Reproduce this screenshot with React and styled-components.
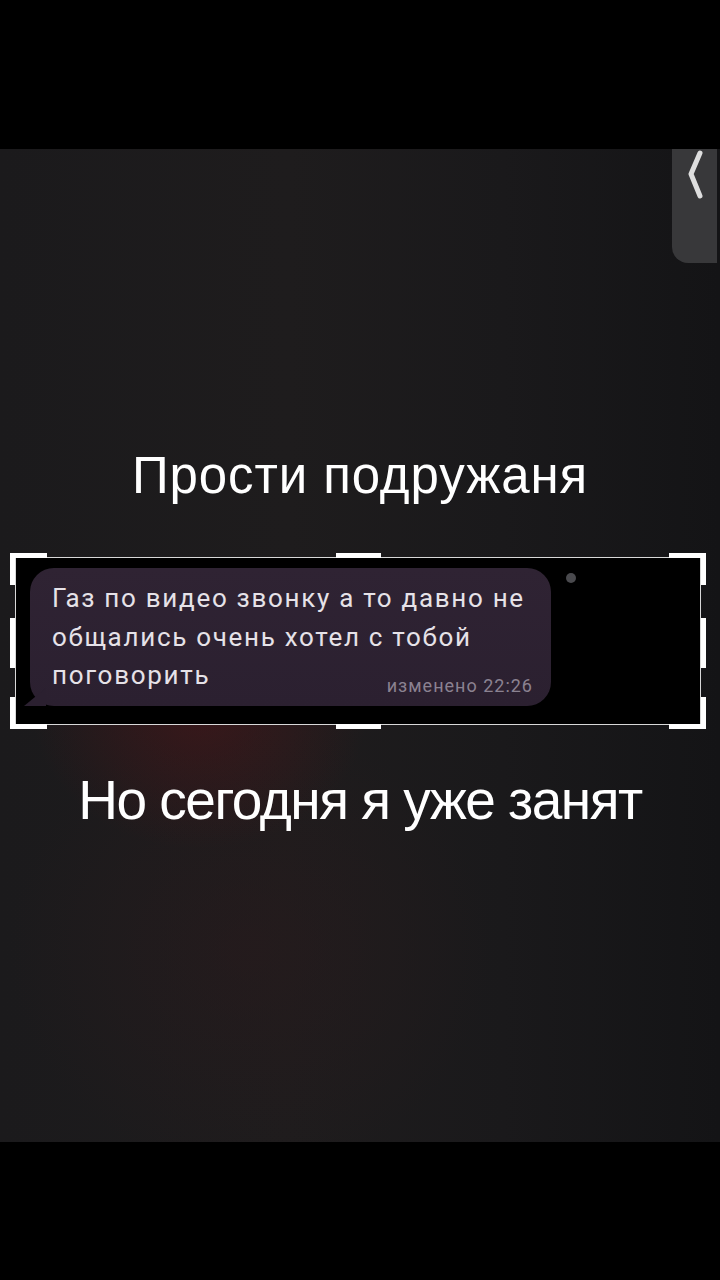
import styled, { createGlobalStyle } from "styled-components";

const GlobalStyle = createGlobalStyle`
  html, body {
    margin: 0;
    padding: 0;
    background: #000;
  }
  body {
    font-family: "Liberation Sans", Arial, sans-serif;
  }
`;

const Screen = styled.div`
  width: 720px;
  height: 1280px;
  display: flex;
  flex-direction: column;
  background: #000;
  overflow: hidden;
`;

const BlackBar = styled.div`
  height: ${(p) => p.$h}px;
  flex: none;
  background: #000;
`;

const Content = styled.div`
  position: relative;
  flex: none;
  height: 993px;
  display: flex;
  flex-direction: column;
  align-items: stretch;
  background:
    radial-gradient(ellipse 240px 200px at 200px 560px, rgba(80, 20, 24, 0.55), rgba(0, 0, 0, 0) 70%),
    radial-gradient(ellipse 320px 300px at 250px 800px, rgba(42, 26, 28, 0.5), rgba(0, 0, 0, 0) 75%),
    linear-gradient(90deg, #1b1a1c 0%, #1e1c1d 40%, #1a191b 70%, #141416 100%);
`;

const SideTab = styled.div`
  position: absolute;
  top: 0;
  right: 3px;
  width: 45px;
  height: 114px;
  background: #38383a;
  border-bottom-left-radius: 16px;
  display: flex;
  justify-content: center;
  align-items: flex-start;
  padding-top: 1px;
  box-sizing: border-box;
`;

const Caption = styled.div`
  color: #fff;
  text-align: center;
  font-family: "Liberation Sans", Arial, sans-serif;
  font-size: ${(p) => p.$size}px;
  line-height: ${(p) => p.$size}px;
  letter-spacing: ${(p) => p.$ls || 0}px;
  margin-top: ${(p) => p.$mt}px;
  white-space: nowrap;
`;

const Frame = styled.div`
  position: relative;
  margin-left: 15px;
  margin-top: ${(p) => p.$mt}px;
  width: 686px;
  height: 168px;
  box-sizing: border-box;
  border: 1.5px solid #d8d8d8;
  background: #000;
  display: flex;
  align-items: flex-start;
  padding: 10px 0 0 14px;
`;

const Bracket = styled.div`
  position: absolute;
  background: #fff;
  ${(p) => p.$pos}
`;

const Bubble = styled.div`
  position: relative;
  width: 521px;
  height: 138px;
  box-sizing: border-box;
  background: linear-gradient(180deg, #2f2333 0%, #2b2030 100%);
  border-radius: 24px;
  padding: 11px 10px 0 22px;
  color: #e6e2e8;
  font-family: Roboto, "Liberation Sans", sans-serif;
  font-size: 26px;
  line-height: 38.5px;
  letter-spacing: 1.7px;
  white-space: nowrap;
`;

const Tail = styled.div`
  position: absolute;
  left: -6px;
  bottom: 0;
  width: 22px;
  height: 18px;
  background: #2b2030;
  clip-path: polygon(0 100%, 100% 0, 100% 100%);
`;

const Stamp = styled.span`
  position: absolute;
  right: 18px;
  bottom: 10px;
  font-size: 18px;
  line-height: 20px;
  color: #8b8291;
  letter-spacing: 1px;
`;

const Dot = styled.div`
  position: absolute;
  left: 550px;
  top: 15px;
  width: 10px;
  height: 10px;
  border-radius: 50%;
  background: #4a4a4e;
`;

const brackets = [
  "left: -6px; top: -5px; width: 37px; height: 5px;",
  "left: -6px; top: -5px; width: 5px; height: 32px;",
  "right: -6px; top: -5px; width: 37px; height: 5px;",
  "right: -6px; top: -5px; width: 5px; height: 32px;",
  "left: -6px; bottom: -5px; width: 37px; height: 5px;",
  "left: -6px; bottom: -5px; width: 5px; height: 32px;",
  "right: -6px; bottom: -5px; width: 37px; height: 5px;",
  "right: -6px; bottom: -5px; width: 5px; height: 32px;",
  "left: 320px; top: -5px; width: 45px; height: 5px;",
  "left: 320px; bottom: -5px; width: 45px; height: 5px;",
  "left: -6px; top: 60px; width: 5px; height: 50px;",
  "right: -6px; top: 60px; width: 5px; height: 50px;",
];

const App = () => {
  return (
    <Screen>
      <GlobalStyle />
      <BlackBar $h={149} />
      <Content>
        <SideTab>
          <svg width="20" height="50" viewBox="0 0 20 50">
            <path
              d="M15 3 L6 24 L15 46"
              fill="none"
              stroke="#dedede"
              strokeWidth="5"
              strokeLinecap="round"
              strokeLinejoin="round"
            />
          </svg>
        </SideTab>
        <Caption $size={51} $mt={301} $ls={0.9}>
          Прости подружаня
        </Caption>
        <Frame $mt={56}>
          {brackets.map((pos, i) => (
            <Bracket key={i} $pos={pos} />
          ))}
          <Bubble>
            <Tail />
            Газ по видео звонку а то давно не
            <br />
            общались очень хотел с тобой
            <br />
            поговорить
            <Stamp>изменено 22:26</Stamp>
          </Bubble>
          <Dot />
        </Frame>
        <Caption $size={55} $mt={48} $ls={-1.5}>
          Но сегодня я уже занят
        </Caption>
      </Content>
      <BlackBar $h={138} />
    </Screen>
  );
};

export default App;
